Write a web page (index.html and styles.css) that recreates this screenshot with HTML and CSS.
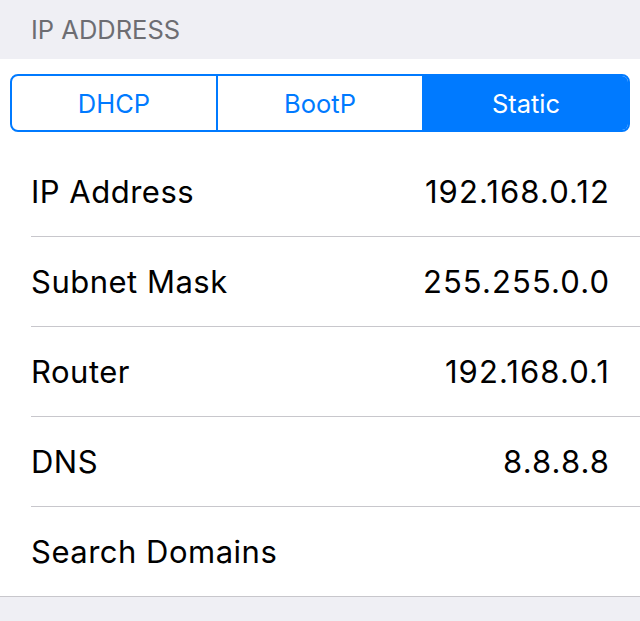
FILE: index.html
```html
<!DOCTYPE html>
<html>
<head>
  <title>IP Address</title>
  <link rel="stylesheet" href="styles.css">
</head>
<body>
  <div class="section-header">IP ADDRESS</div>

  <div class="group">
    <div class="segment-wrap">
      <div class="segmented">
        <a href="#" class="segment">DHCP</a>
        <a href="#" class="segment">BootP</a>
        <a href="#" class="segment active">Static</a>
      </div>
    </div>

    <div class="row">
      <span class="label">IP Address</span>
      <span class="value">192.168.0.12</span>
    </div>
    <div class="row">
      <span class="label">Subnet Mask</span>
      <span class="value">255.255.0.0</span>
    </div>
    <div class="row">
      <span class="label">Router</span>
      <span class="value">192.168.0.1</span>
    </div>
    <div class="row">
      <span class="label">DNS</span>
      <span class="value">8.8.8.8</span>
    </div>
    <div class="row last">
      <span class="label">Search Domains</span>
      <span class="value"></span>
    </div>
  </div>
</body>
</html>
```

FILE: styles.css
```css
/* Global styles */
body {
  font-family: Inter, "Noto Sans", sans-serif;
  margin: 0;
  padding: 0;
  background-color: #efeff4;
  color: #000;
}

/* Section header */
.section-header {
  height: 59px;
  box-sizing: border-box;
  padding: 14px 31px 0;
  font-size: 25.5px;
  color: #6d6d72;
}

/* Grouped list */
.group {
  background-color: #fff;
  border-bottom: 1px solid #c8c7cc;
}

.segment-wrap {
  padding: 15px 10px;
}

.segmented {
  display: flex;
  height: 58px;
  box-sizing: border-box;
  border: 2px solid #007aff;
  border-radius: 8px;
  overflow: hidden;
}

.segment {
  flex: 1;
  display: flex;
  align-items: center;
  justify-content: center;
  color: #007aff;
  text-decoration: none;
  font-size: 25.5px;
  border-left: 2px solid #007aff;
}

.segment:first-child {
  border-left: none;
}

.segment.active {
  background-color: #007aff;
  color: #fff;
}

.row {
  display: flex;
  justify-content: space-between;
  align-items: center;
  height: 90px;
  box-sizing: border-box;
  margin-left: 31px;
  padding-right: 31px;
  border-bottom: 1px solid #c8c7cc;
  font-size: 31px;
}

.label {
  letter-spacing: 0.5px;
}

.value {
  letter-spacing: 1.1px;
  margin-right: -1.1px;
}

.row.last {
  border-bottom: none;
  height: 89px;
}
```
